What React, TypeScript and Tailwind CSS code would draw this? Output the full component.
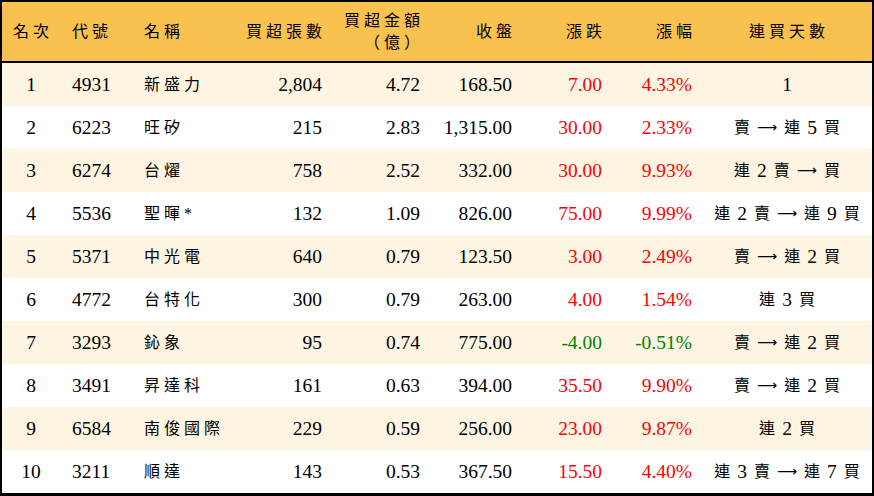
const rows = [
  { rank: "1", code: "4931", name: "新盛力", vol: "2,804", amt: "4.72", close: "168.50", chg: "7.00", pct: "4.33%", streak: "1" },
  { rank: "2", code: "6223", name: "旺矽", vol: "215", amt: "2.83", close: "1,315.00", chg: "30.00", pct: "2.33%", streak: "賣 → 連 5 買" },
  { rank: "3", code: "6274", name: "台燿", vol: "758", amt: "2.52", close: "332.00", chg: "30.00", pct: "9.93%", streak: "連 2 賣 → 買" },
  { rank: "4", code: "5536", name: "聖暉*", vol: "132", amt: "1.09", close: "826.00", chg: "75.00", pct: "9.99%", streak: "連 2 賣 → 連 9 買" },
  { rank: "5", code: "5371", name: "中光電", vol: "640", amt: "0.79", close: "123.50", chg: "3.00", pct: "2.49%", streak: "賣 → 連 2 買" },
  { rank: "6", code: "4772", name: "台特化", vol: "300", amt: "0.79", close: "263.00", chg: "4.00", pct: "1.54%", streak: "連 3 買" },
  { rank: "7", code: "3293", name: "鈊象", vol: "95", amt: "0.74", close: "775.00", chg: "-4.00", pct: "-0.51%", streak: "賣 → 連 2 買" },
  { rank: "8", code: "3491", name: "昇達科", vol: "161", amt: "0.63", close: "394.00", chg: "35.50", pct: "9.90%", streak: "賣 → 連 2 買" },
  { rank: "9", code: "6584", name: "南俊國際", vol: "229", amt: "0.59", close: "256.00", chg: "23.00", pct: "9.87%", streak: "連 2 買" },
  { rank: "10", code: "3211", name: "順達", vol: "143", amt: "0.53", close: "367.50", chg: "15.50", pct: "4.40%", streak: "連 3 賣 → 連 7 買" },
];

const cols = "grid grid-cols-[58px_72px_100px_100px_98px_92px_90px_90px_170px]";

function Streak({ text }: { text: string }) {
  return (
    <div className="flex items-center justify-center gap-[7px] whitespace-nowrap">
      {text.split(" ").map((t, i) => {
        if (/^\d+$/.test(t)) return <span key={i}>{t}</span>;
        if (t === "→")
          return (
            <span key={i} className="text-[14px]" style={{ fontFamily: '"DejaVu Sans", sans-serif' }}>
              ⟶
            </span>
          );
        return (
          <span key={i} className="text-[16px]">
            {t}
          </span>
        );
      })}
    </div>
  );
}

export default function App() {
  return (
    <div
      className="h-[496px] w-[874px] border-x-2 border-t-2 border-b-[3px] border-black bg-white text-black"
      style={{ fontFamily: '"Liberation Serif", "Noto Sans CJK TC", serif' }}
    >
      <div className={`${cols} h-[61px] items-center border-b-2 border-black bg-[#f9c150] text-[16px] tracking-[4px]`}>
        <div className="pl-[4px] text-center">名次</div>
        <div className="pl-3">代號</div>
        <div className="pl-3">名稱</div>
        <div className="pr-[6px] text-right">買超張數</div>
        <div className="pr-[6px] text-right leading-[22px]">
          <div>買超金額</div>
          <div>（億）</div>
        </div>
        <div className="pr-[6px] text-right">收盤</div>
        <div className="pr-[6px] text-right">漲跌</div>
        <div className="pr-[6px] text-right">漲幅</div>
        <div className="pl-[4px] text-center">連買天數</div>
      </div>

      {rows.map((r, i) => {
        const neg = r.chg.startsWith("-");
        const tone = neg ? "text-[#008000]" : "text-[#ff0000]";
        return (
          <div
            key={r.rank}
            className={`${cols} h-[43px] items-center text-[19.5px] ${i % 2 === 0 ? "bg-[#fdf4e1]" : "bg-white"}`}
          >
            <div className="text-center">{r.rank}</div>
            <div className="pl-3">{r.code}</div>
            <div className="pl-3 text-[16px] tracking-[4px] text-black">{r.name}</div>
            <div className="pr-[10px] text-right">{r.vol}</div>
            <div className="pr-[10px] text-right">{r.amt}</div>
            <div className="pr-[10px] text-right">{r.close}</div>
            <div className={`pr-[10px] text-right ${tone}`}>{r.chg}</div>
            <div className={`pr-[10px] text-right ${tone}`}>{r.pct}</div>
            <Streak text={r.streak} />
          </div>
        );
      })}
    </div>
  );
}
